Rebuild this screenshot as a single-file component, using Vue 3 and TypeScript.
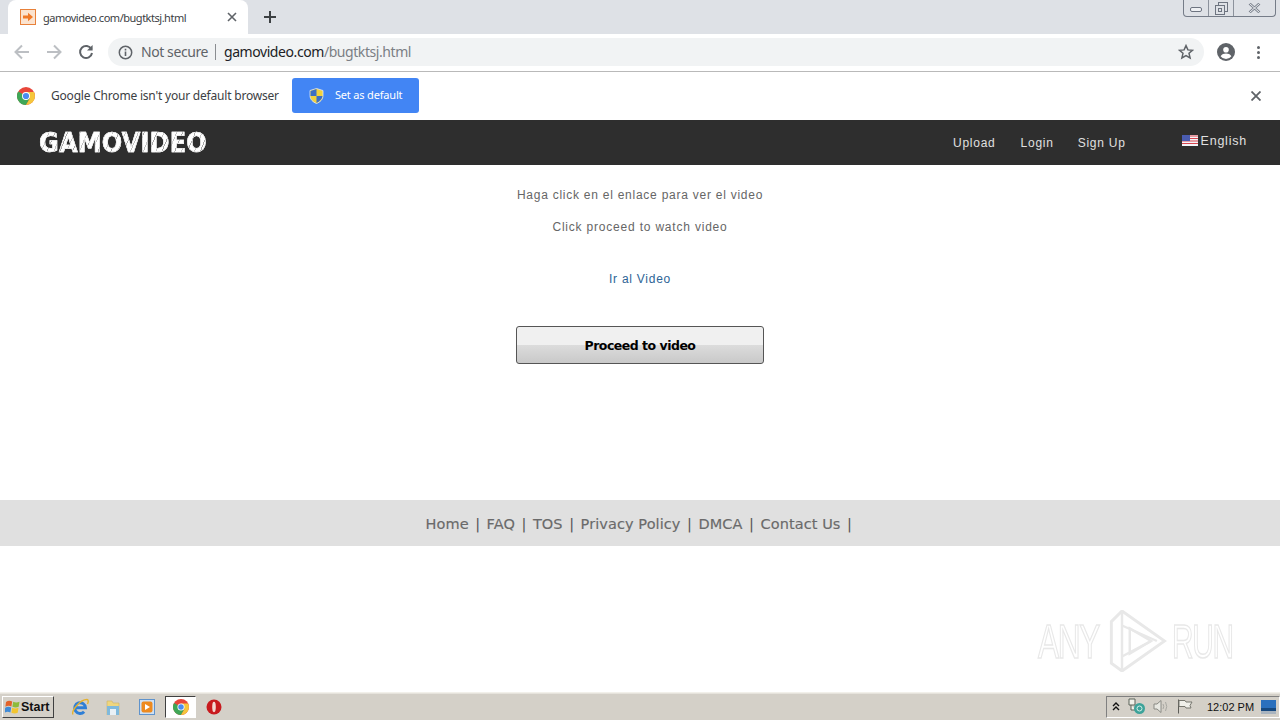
<script setup lang="ts">
const footerLinks: string[] = ['Home', 'FAQ', 'TOS', 'Privacy Policy', 'DMCA', 'Contact Us']
</script>

<template>
  <div class="screen">
    <header class="tabstrip">
      <div class="tab">
        <svg class="favicon" width="16" height="16" viewBox="0 0 16 16">
          <rect x="0.5" y="0.5" width="15" height="15" fill="#fbe3cf" stroke="#e8813a" />
          <path d="M3 6.5h5V3.8L13 8l-5 4.2V9.5H3z" fill="#f07a28" />
        </svg>
        <span class="tab-title">gamovideo.com/bugtktsj.html</span>
        <svg class="tab-close" width="10" height="10" viewBox="0 0 10 10">
          <path d="M1 1l8 8M9 1l-8 8" stroke="#5f6368" stroke-width="1.6" />
        </svg>
      </div>
      <svg class="new-tab" width="12" height="12" viewBox="0 0 12 12">
        <path d="M6 0v12M0 6h12" stroke="#3c4043" stroke-width="2" />
      </svg>
      <div class="win-controls">
        <div class="win-btn min"><svg width="12" height="6" viewBox="0 0 12 6"><rect x="0.5" y="0.5" width="11" height="4" rx="1.5" fill="#eef0f3" stroke="#6d7480" /></svg></div>
        <div class="win-btn mid"><svg width="13" height="13" viewBox="0 0 13 13"><rect x="3.5" y="0.5" width="9" height="9" fill="none" stroke="#6d7480" /><rect x="0.5" y="3.5" width="9" height="9" fill="#dee1e6" stroke="#6d7480" /><rect x="3.5" y="6.5" width="3" height="3" fill="none" stroke="#6d7480" /></svg></div>
        <div class="win-btn close"><svg width="13" height="10" viewBox="0 0 13 10"><path d="M1.5 0.5l10 9M11.500 0.500l-10 9" stroke="#7c838e" stroke-width="2.6" fill="none" /><path d="M1.500 0.500l10 9M11.500 0.500l-10 9" stroke="#eef0f3" stroke-width="1" fill="none" /></svg></div>
      </div>
    </header>

    <div class="toolbar">
      <svg class="nav-ic" width="16" height="16" viewBox="0 0 16 16"><path d="M15 8H2M8 1.5L1.5 8 8 14.5" fill="none" stroke="#bcbfc3" stroke-width="2" /></svg>
      <svg class="nav-ic" width="16" height="16" viewBox="0 0 16 16"><path d="M1 8h13M8 1.5L14.5 8 8 14.5" fill="none" stroke="#bcbfc3" stroke-width="2" /></svg>
      <svg class="nav-ic" width="16" height="16" viewBox="0 0 16 16"><path d="M13.4 5.2A6 6 0 1 0 14 9" fill="none" stroke="#5f6368" stroke-width="2" /><path d="M14.6 1v5.6H9z" fill="#5f6368" /></svg>
      <div class="omnibox">
        <svg width="15" height="15" viewBox="0 0 15 15"><circle cx="7.5" cy="7.5" r="6.2" fill="none" stroke="#5f6368" stroke-width="1.5" /><path d="M7.5 6.6v4.4M7.5 3.8v1.6" stroke="#5f6368" stroke-width="1.6" /></svg>
        <span class="not-secure">Not secure</span>
        <span class="omni-sep"></span>
        <span class="url">gamovideo.com<span class="url-path">/bugtktsj.html</span></span>
        <svg class="star" width="16" height="16" viewBox="0 0 16 16"><path d="M8 1.6l1.9 4.3 4.6.4-3.500 3 1.100 4.600L8 11.500l-4.100 2.400L5 9.300l-3.500-3 4.600-.4z" fill="none" stroke="#5f6368" stroke-width="1.5" /></svg>
      </div>
      <svg class="avatar" width="18" height="18" viewBox="0 0 18 18"><circle cx="9" cy="9" r="9" fill="#5f6368" /><circle cx="9" cy="6.800" r="2.800" fill="#fff" /><path d="M3.600 13.200c1.200-2 3.300-2.700 5.400-2.700s4.200.7 5.400 2.700A6.800 6.800 0 0 1 9 16a6.800 6.800 0 0 1-5.400-2.800z" fill="#fff" /></svg>
      <div class="kebab"><i></i><i></i><i></i></div>
    </div>

    <div class="infobar">
      <svg class="chrome-logo" width="18" height="18" viewBox="0 0 18 18">
        <circle cx="9" cy="9" r="9" fill="#e8463a" />
        <path d="M9 9L1.200 4.500A9 9 0 0 0 9 18l3.900-6.800z" fill="#3fa757" />
        <path d="M9 5h8a9 9 0 0 1-8 13l3.900-6.800z" fill="#f5c63c" />
        <circle cx="9" cy="9" r="4" fill="#fff" />
        <circle cx="9" cy="9" r="3.100" fill="#4a8cf0" />
      </svg>
      <span class="info-text">Google Chrome isn't your default browser</span>
      <div class="default-btn">
        <svg width="15" height="16" viewBox="0 0 15 16">
          <path d="M7.500 0.500L14 2.500v5c0 4-3 6.600-6.500 8C4 14.100 1 11.500 1 7.500v-5z" fill="#f2d23e" stroke="#dfe7f5" stroke-width="0.8" />
          <path d="M7.500 1v7H1.500V3zM7.500 8h6c-.3 3-3 5.500-6 7z" fill="#3d6fc4" />
        </svg>
        <span>Set as default</span>
      </div>
      <svg class="info-close" width="10" height="10" viewBox="0 0 10 10"><path d="M0.500 0.500l9 9M9.500 0.500l-9 9" stroke="#5f6368" stroke-width="1.800" /></svg>
    </div>

    <nav class="sitebar">
      <div class="logo">GAMOVIDEO</div>
      <div class="site-links">
        <a class="site-link upload">Upload</a>
        <a class="site-link login">Login</a>
        <a class="site-link signup">Sign Up</a>
      </div>
      <div class="lang">
        <svg width="16" height="11" viewBox="0 0 16 11">
          <rect width="16" height="11" fill="#f4f4f8" />
          <path d="M0 1h16M0 3.500h16M0 6h16M0 8.500h16" stroke="#d8454f" stroke-width="1.200" />
          <rect width="8" height="6" fill="#4a5cb0" />
        </svg>
        <span>English</span>
      </div>
    </nav>

    <main class="content">
      <p class="msg first">Haga click en el enlace para ver el video</p>
      <p class="msg second">Click proceed to watch video</p>
      <a class="video-link">Ir al Video</a>
      <button class="proceed" type="button">Proceed to video</button>
    </main>

    <footer class="footer">
      <template v-for="link in footerLinks" :key="link">
        <a class="foot-link">{{ link }}</a><span class="foot-sep">|</span>
      </template>
    </footer>

    <div class="blank"></div>

    <div class="taskbar">
      <div class="start">
        <svg width="16" height="15" viewBox="0 0 16 15">
          <path d="M1 3c2-1.500 4-1.500 6.200-.5L6.400 7.500C4.500 6.500 2.500 6.500.4 7.800z" fill="#e2622a" />
          <path d="M8.200 2.800c2 1 4 1 6.300 0l-.8 5c-2 1-4 1-6.300 0z" fill="#8dbb3c" />
          <path d="M.2 8.800c2-1.300 4-1.300 6-.3l-.8 5c-2-1-4-1-6 .3z" fill="#3f8ad6" />
          <path d="M7.200 8.800c2 1 4 1 6.300 0l-.8 5c-2 1-4 1-6.300 0z" fill="#f2c530" />
        </svg>
        <span>Start</span>
      </div>
      <div class="task-icons">
        <svg class="t-ie" width="18" height="18" viewBox="0 0 18 18">
          <path d="M4 9.800h10.500a5.400 5.400 0 1 0-1.400 3.900" fill="none" stroke="#2f7fd6" stroke-width="3" />
          <path d="M2 16.500C0 13 9 1.500 16 1.500c1.500 0 1.500 2.500.5 4.500" fill="none" stroke="#e5b22f" stroke-width="1.400" />
        </svg>
        <svg class="t-folder" width="14" height="16" viewBox="0 0 14 16">
          <path d="M1 2h5l1 2h6v12H1z" fill="#efd67e" stroke="#c9b26a" stroke-width="0.6" />
          <rect x="1" y="7" width="12" height="9" fill="#7fb9dc" />
          <rect x="4" y="10" width="6" height="6" fill="#e9f1f6" />
        </svg>
        <svg class="t-media" width="16" height="16" viewBox="0 0 16 16">
          <rect x="0.500" y="0.500" width="15" height="15" fill="#cfe0f2" stroke="#5f93cc" />
          <rect x="2.500" y="2.500" width="11" height="11" rx="2" fill="#ee8a1e" />
          <path d="M6 5l5 3-5 3z" fill="#fff" />
        </svg>
        <div class="t-active">
          <svg width="16" height="16" viewBox="0 0 18 18">
            <circle cx="9" cy="9" r="9" fill="#e8463a" />
            <path d="M9 9L1.200 4.500A9 9 0 0 0 9 18l3.900-6.800z" fill="#3fa757" />
            <path d="M9 5h8a9 9 0 0 1-8 13l3.900-6.800z" fill="#f5c63c" />
            <circle cx="9" cy="9" r="4" fill="#fff" />
            <circle cx="9" cy="9" r="3.100" fill="#4a8cf0" />
          </svg>
        </div>
        <svg class="t-opera" width="16" height="16" viewBox="0 0 16 16">
          <circle cx="8" cy="8" r="7.500" fill="#c81a1e" />
          <ellipse cx="8" cy="8" rx="1.800" ry="5.200" fill="#f3d8d2" />
        </svg>
      </div>
      <div class="tray">
        <svg width="8" height="9" viewBox="0 0 8 9"><path d="M1 4l3-3 3 3M1 8l3-3 3 3" fill="none" stroke="#111" stroke-width="1.400" /></svg>
        <svg class="tray-net" width="18" height="17" viewBox="0 0 18 17">
          <path d="M1 1h6v6H1zM3 7v5h5" fill="#f1f1ea" stroke="#5b6258" />
          <circle cx="11.500" cy="10.500" r="5.500" fill="#3da39a" />
          <circle cx="11.500" cy="10.500" r="2.500" fill="none" stroke="#d6efe9" />
        </svg>
        <svg class="tray-vol" width="16" height="15" viewBox="0 0 16 15">
          <path d="M1 5h3l4-3.500v12L4 10H1z" fill="#e8e8e2" stroke="#8a8a84" />
          <path d="M10 5q1.500 2.500 0 5M12.500 3q2.500 4.500 0 9" fill="none" stroke="#a8a8a2" />
        </svg>
        <svg class="tray-flag" width="16" height="15" viewBox="0 0 16 15">
          <path d="M1.500 0.500v14" stroke="#5d5d58" />
          <path d="M2 1.500h6l1 1.500h6l-2 3.500 1 2.500H9L8 7.500H2z" fill="#f0f0ea" stroke="#77776f" />
        </svg>
        <span class="clock">12:02 PM</span>
        <svg class="show-desktop" width="15" height="14" viewBox="0 0 15 14">
          <rect width="15" height="11" fill="#2b70bd" />
          <path d="M0 8h15v3H0z" fill="#17497f" />
          <rect y="11" width="15" height="3" fill="#a9b4bf" />
        </svg>
      </div>
    </div>

    <div class="watermark">
      <span class="wm-text wm-any">ANY</span>
      <svg width="59" height="62" viewBox="0 0 60 64">
        <g fill="none" stroke="#e8e8e8">
          <path d="M3 12L14 1l44 31-44 31-11-8z" stroke-width="3" />
          <path d="M14 1v62" stroke-width="2.500" />
          <path d="M22 19l22 13-22 13z" stroke-width="2.500" />
          <path d="M14 16l36 16M14 48l30-16" stroke-width="2.500" />
        </g>
      </svg>
      <span class="wm-text wm-run">RUN</span>
    </div>
  </div>
</template>

<style>
html, body { margin: 0; background: #fff; }
</style>

<style scoped>
.screen {
  position: relative;
  width: 1280px;
  height: 720px;
  overflow: hidden;
  display: flex;
  flex-direction: column;
  background: #fff;
  font-family: "Liberation Sans", Arial, sans-serif;
}
svg { flex: none; display: block; }

/* Tab strip */
.tabstrip {
  flex: none;
  height: 34px;
  background: #dee1e6;
  display: flex;
  align-items: flex-start;
}
.tab {
  width: 240px;
  height: 34px;
  margin-left: 8px;
  padding: 0 10px 0 12px;
  box-sizing: border-box;
  background: #fff;
  border-radius: 8px 8px 0 0;
  display: flex;
  align-items: center;
}
.tab-title {
  margin-left: 7px;
  font: 11px "Noto Sans", "Open Sans", sans-serif;
  letter-spacing: -0.48px;
  color: #3c4043;
  white-space: nowrap;
}
.tab-close { margin-left: auto; margin-right: 1px; }
.new-tab { margin: 11px 0 0 16px; }
.win-controls {
  margin-left: auto;
  margin-right: 4px;
  width: 93px;
  height: 17px;
  box-sizing: border-box;
  display: flex;
  border: 1px solid #757c88;
  border-top: 0;
  border-radius: 0 0 4px 4px;
}
.win-btn { display: flex; align-items: center; justify-content: center; box-sizing: border-box; }
.win-btn.min { width: 25px; border-right: 1px solid #8c929c; padding-top: 3px; }
.win-btn.mid { width: 25px; border-right: 1px solid #8c929c; }
.win-btn.close { flex: 1; }

/* Toolbar */
.toolbar {
  flex: none;
  height: 38px;
  box-sizing: border-box;
  background: #fff;
  border-bottom: 1px solid #b9b9b9;
  display: flex;
  align-items: center;
  padding: 0 14px 1px 14px;
}
.nav-ic { margin-right: 16px; }
.omnibox {
  width: 1096px;
  height: 28px;
  margin-left: -2px;
  margin-right: 13px;
  padding: 0 11px 0 10px;
  box-sizing: border-box;
  background: #f1f3f4;
  border-radius: 14px;
  display: flex;
  align-items: center;
  font-family: "Noto Sans", "Open Sans", sans-serif;
}
.not-secure { margin: 0 0 2px 8px; font-size: 14px; letter-spacing: -0.42px; color: #5f6368; }
.omni-sep { width: 1px; height: 16px; margin: 0 8px 0 7px; background: #8a8d91; }
.url { margin-bottom: 2px; font-size: 14px; letter-spacing: -0.43px; color: #202124; }
.url-path { color: #7b7f84; }
.star { margin-left: auto; margin-right: -1px; }
.kebab {
  margin-left: 22px;
  display: flex;
  flex-direction: column;
  gap: 2px;
}
.kebab i { width: 3px; height: 3px; border-radius: 50%; background: #5f6368; display: block; }

/* Infobar */
.infobar {
  flex: none;
  height: 48px;
  box-sizing: border-box;
  background: #fff;
  display: flex;
  align-items: center;
  padding: 0 19px 1px 17px;
}
.info-text {
  margin-left: 16px;
  font: 12px "Noto Sans", "Open Sans", sans-serif;
  letter-spacing: -0.2px;
  color: #3c4043;
  white-space: nowrap;
}
.default-btn {
  margin-left: 13px;
  width: 127px;
  height: 35px;
  padding-left: 17px;
  box-sizing: border-box;
  background: #4285f4;
  border-radius: 3px;
  display: flex;
  align-items: center;
  gap: 11px;
  color: #fff;
  font: 11px "Noto Sans", "Open Sans", sans-serif;
  letter-spacing: -0.17px;
}
.default-btn span { margin-bottom: 2px; }
.info-close { margin-left: auto; }

/* Site nav */
.sitebar {
  flex: none;
  height: 45px;
  background: #2e2e2e;
  display: flex;
  align-items: center;
  color: #fff;
  font-size: 12px;
  letter-spacing: 0.75px;
}
.logo {
  flex: none;
  margin-left: 39px;
  margin-right: -23px;
  width: 191px;
  font: 900 27px "DejaVu Sans", sans-serif;
  letter-spacing: 0.2px;
  white-space: nowrap;
  background: repeating-linear-gradient(115deg, #fff 0 5px, #a8a8a8 5px 6px, #fff 6px 12px, #c4c4c4 12px 13px);
  -webkit-background-clip: text;
  background-clip: text;
  color: transparent;
  -webkit-text-stroke: 0.6px #f4f4f4;
  transform: scaleX(0.89);
  transform-origin: left;
}
.site-links { display: flex; margin-left: 746px; }
.site-link { color: #e0e0e0; }
.login { margin-left: 25px; }
.signup { margin-left: 24px; }
.lang {
  margin-left: 56px;
  display: flex;
  align-items: center;
  gap: 3px;
  font-size: 12.5px;
  color: #e0e0e0;
  padding-bottom: 4px;
}

/* Main */
.content {
  flex: none;
  height: 335px;
  display: flex;
  flex-direction: column;
  align-items: center;
  font-size: 12px;
  letter-spacing: 0.75px;
  color: #666;
}
.msg { margin: 0; line-height: 16px; white-space: nowrap; }
.first { margin-top: 22px; }
.second { margin-top: 16px; letter-spacing: 0.8px; }
.video-link { margin-top: 36px; line-height: 16px; color: #2d6496; }
.proceed {
  margin-top: 39px;
  width: 248px;
  height: 38px;
  padding: 0;
  border: 1px solid #555;
  border-radius: 3px;
  background: linear-gradient(#f0f0f0 0 50%, #dcdcdc 50%, #c9c9c9 100%);
  color: #000;
  font: bold 12.5px "DejaVu Sans", Verdana, sans-serif;
  letter-spacing: -0.5px;
}

/* Footer */
.footer {
  flex: none;
  height: 46px;
  box-sizing: border-box;
  padding: 1px 0 0 4px;
  background: #e0e0e0;
  display: flex;
  align-items: center;
  justify-content: center;
  font: 14.5px "DejaVu Sans", Verdana, sans-serif;
  letter-spacing: 0.08px;
  color: #666;
}
.foot-link { color: #6a6a6a; white-space: nowrap; -webkit-text-stroke: 0.15px #6a6a6a; }
.foot-sep { margin: 0 6.5px; color: #555; }

.blank { flex: 1; }

/* Taskbar */
.taskbar {
  flex: none;
  height: 28px;
  box-sizing: border-box;
  background: #d4d0c8;
  border-top: 1px solid #f2f0ea;
  box-shadow: inset 0 1px 0 #e6e3dc;
  display: flex;
  align-items: center;
  padding-left: 2px;
  position: relative;
}
.start {
  width: 52px;
  height: 22px;
  box-sizing: border-box;
  border: 1px solid;
  border-color: #fff #404040 #404040 #fff;
  display: flex;
  align-items: center;
  gap: 0;
  padding-left: 2px;
  font: bold 12.5px "Liberation Sans", Arial, sans-serif;
  color: #111;
}
.task-icons { display: flex; align-items: center; margin-left: 17px; }
.t-folder { margin-left: 17px; }
.t-media { margin-left: 19px; }
.t-active {
  width: 31px;
  height: 22px;
  margin-left: 10px;
  box-sizing: border-box;
  background: #fff;
  border: 1px solid;
  border-color: #404040 #fff #fff #404040;
  display: flex;
  align-items: center;
  justify-content: center;
}
.t-opera { margin-left: 10px; }
.tray {
  margin-left: auto;
  width: 174px;
  height: 22px;
  box-sizing: border-box;
  border: 1px solid;
  border-color: #808080 #fff #fff #808080;
  display: flex;
  align-items: center;
  padding-left: 5px;
}
.tray-net { margin-left: 8px; }
.tray-vol { margin-left: 7px; }
.tray-flag { margin-left: 8px; }
.clock { margin-left: 14px; font: 11px "Liberation Sans", Arial, sans-serif; color: #111; white-space: nowrap; }
.show-desktop { margin-left: auto; margin-right: 3px; }

/* Watermark overlay */
.watermark {
  position: absolute;
  left: 1038px;
  top: 610px;
  display: flex;
  align-items: center;
  pointer-events: none;
}
.wm-text {
  display: block;
  font: 48px "Liberation Sans", Arial, sans-serif;
  letter-spacing: -2px;
  color: #fff;
  -webkit-text-stroke: 1.5px #e8e8e8;
  transform: scaleX(0.66);
  transform-origin: left;
  white-space: nowrap;
}
.wm-any { width: 62px; margin-right: 8px; }
.wm-run { width: 60px; margin-left: 5px; transform: scaleX(0.62); }
</style>
